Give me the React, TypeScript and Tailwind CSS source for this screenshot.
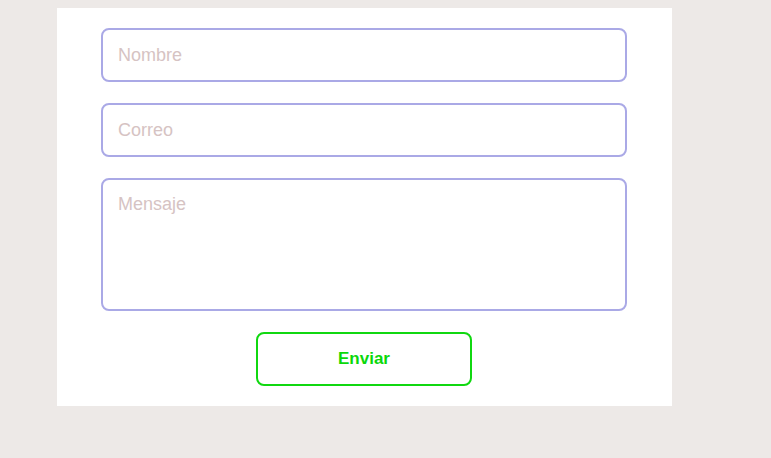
import React from 'react';

const fieldClass =
  "w-full rounded-lg border-2 border-[#aaa9e6] bg-white px-[15px] text-lg text-gray-700 outline-none placeholder:text-[#d6c3c3]";

const App: React.FC = () => {
  return (
    <div className="min-h-[458px] w-full bg-[#ede9e7] pt-2 pl-[57px]" style={{ fontFamily: '"Liberation Sans", Arial, sans-serif' }}>
      <form className="flex w-[615px] flex-col items-center gap-[21px] bg-white pl-[44px] pr-[45px] pt-5 pb-5" onSubmit={(e) => e.preventDefault()}>
        <input type="text" placeholder="Nombre" className={`${fieldClass} h-[54px]`} />
        <input type="email" placeholder="Correo" className={`${fieldClass} h-[54px]`} />
        <textarea placeholder="Mensaje" className={`${fieldClass} h-[133px] resize-none pt-[10px]`} />
        <button type="submit" className="h-[54px] w-[216px] rounded-lg border-2 border-[#10d810] bg-white text-[17px] font-bold text-[#0ad80a]">
          Enviar
        </button>
      </form>
    </div>
  );
};

export default App;
